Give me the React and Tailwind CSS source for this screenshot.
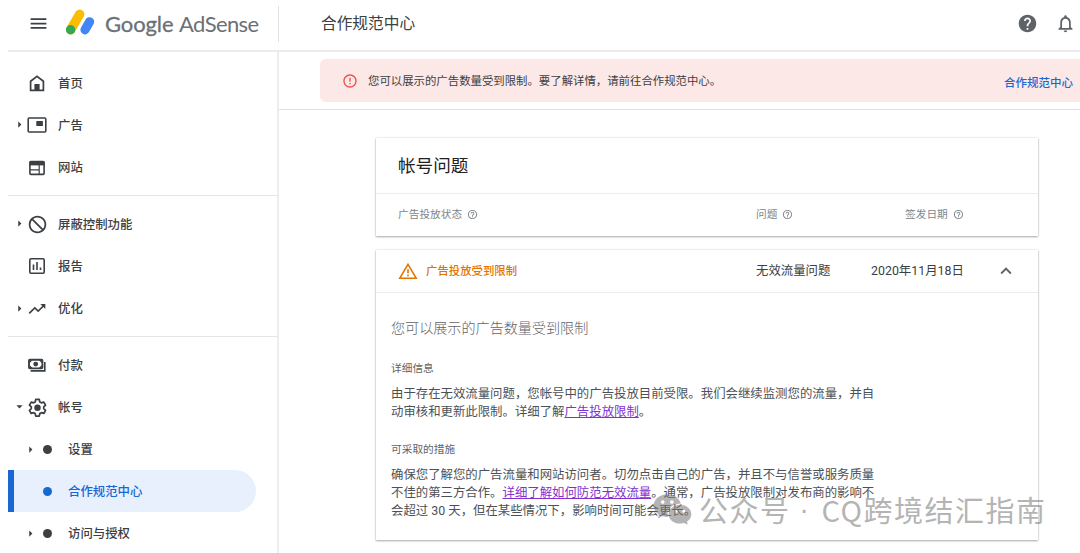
import {
    MdMenu,
    MdHelp,
    MdHelpOutline,
    MdNotificationsNone,
    MdErrorOutline,
    MdBlock,
    MdTrendingUp,
    MdExpandLess,
    MdArrowRight,
    MdArrowDropDown,
} from "react-icons/md";
import { AiFillWechat } from "react-icons/ai";

function HomeIcon() {
    return (
        <svg viewBox="0 0 18 18" className="size-[18px]" fill="none" stroke="currentColor" strokeWidth="1.7">
            <path d="M2.6 16.3V7.2L9 2.4l6.4 4.8v9.1z" />
            <path d="M6.4 10h5.2v6.3H6.4z" fill="currentColor" stroke="none" />
        </svg>
    );
}

function AdsIcon() {
    return (
        <svg viewBox="0 0 20 18" className="h-[18px] w-5 shrink-0" fill="none" stroke="currentColor" strokeWidth="1.6">
            <rect x="1.2" y="2" width="17.6" height="14" rx="1" />
            <path d="M9.3 5h6.6v5H9.3z" fill="currentColor" stroke="none" />
        </svg>
    );
}

function SitesIcon() {
    return (
        <svg viewBox="0 0 18 18" className="size-[18px]" fill="none" stroke="currentColor">
            <rect x="1.9" y="2.6" width="14.2" height="12.8" rx="1" strokeWidth="1.6" />
            <path d="M1.6 2.4h14.8v4H1.6z" fill="currentColor" stroke="none" />
            <path d="M2 10.8h9M11.2 6v9.5" strokeWidth="1.2" />
        </svg>
    );
}

function ReportsIcon() {
    return (
        <svg viewBox="0 0 18 18" className="size-[18px]" fill="none" stroke="currentColor" strokeWidth="1.6">
            <rect x="1.8" y="1.8" width="14.4" height="14.4" rx="1.2" />
            <path d="M5.5 7.6v5.4M9 5v8M12.5 10.4V13" />
        </svg>
    );
}

function PaymentsIcon() {
    return (
        <svg viewBox="0 0 18 18" className="size-[18px]" fill="none" stroke="currentColor">
            <rect x="1" y="3.8" width="13.4" height="8.6" rx="0.8" strokeWidth="1.9" />
            <circle cx="7.7" cy="8.1" r="2.4" fill="currentColor" stroke="none" />
            <path d="M1.5 4.3h3L1.5 7.2zM13.9 4.3h-3l3 2.9zM1.5 11.9h3L1.5 9zM13.9 11.9h-3l3-2.9z" fill="currentColor" stroke="none" />
            <path d="M2.6 14.9h14.2V6" strokeWidth="1.6" />
        </svg>
    );
}

function GearIcon() {
    return (
        <svg viewBox="0 0 24 24" className="size-[21px] shrink-0" fill="none" stroke="currentColor" strokeWidth="2">
            <path
                strokeLinejoin="round"
                d="M10 2.8h4l.6 2.8 1.9 1.1 2.7-.9 2 3.5-2.1 1.9v2.2l2.1 1.9-2 3.5-2.7-.9-1.9 1.1-.6 2.8h-4l-.6-2.8-1.9-1.1-2.7.9-2-3.5 2.1-1.9v-2.2L2.8 9.3l2-3.5 2.7.9 1.9-1.1z"
            />
            <circle cx="12" cy="12.2" r="3.7" fill="currentColor" stroke="none" />
        </svg>
    );
}

function WarningIcon() {
    return (
        <svg viewBox="0 0 20 18" className="h-[18px] w-5" fill="none" stroke="currentColor" strokeWidth="1.6">
            <path d="M10 2.4 18.2 16.2H1.8z" />
            <path d="M10 7.2v4M10 12.6v1.7" />
        </svg>
    );
}

function Logo() {
    return (
        <div className="flex items-center">
            <svg viewBox="0 0 30 28" className="h-7 w-[30px] overflow-visible">
                <path d="M5.6 19.8 14.7 4.2" stroke="#fbbc04" strokeWidth="9.4" strokeLinecap="round" />
                <path d="M20 19.8l4.6-8" stroke="#4285f4" strokeWidth="9.2" strokeLinecap="round" />
                <circle cx="5.6" cy="19.8" r="4.7" fill="#34a853" />
            </svg>
            <div className="ml-[10px] flex gap-[5px] pt-px font-[Lato] text-[22px] leading-7 text-[#6b7075]">
                <span className="w-[69px] tracking-[-0.1px] [-webkit-text-stroke:0.3px_#6b7075]">Google</span>
                <span className="tracking-[-0.6px]">AdSense</span>
            </div>
        </div>
    );
}

const navGroups = [
    [
        { label: "首页", icon: <HomeIcon /> },
        { label: "广告", icon: <AdsIcon />, arrow: "right" },
        { label: "网站", icon: <SitesIcon /> },
    ],
    [
        { label: "屏蔽控制功能", icon: <MdBlock className="size-[21px] shrink-0 -scale-x-100" />, arrow: "right" },
        { label: "报告", icon: <ReportsIcon /> },
        { label: "优化", icon: <MdTrendingUp className="size-[20px] shrink-0" />, arrow: "right" },
    ],
    [
        { label: "付款", icon: <PaymentsIcon /> },
        { label: "帐号", icon: <GearIcon />, arrow: "down" },
        { label: "设置", child: true, arrow: "right" },
        { label: "合作规范中心", child: true, active: true },
        { label: "访问与授权", child: true, arrow: "right" },
    ],
];

function Arrow({ type }) {
    return (
        <span className="flex w-3 shrink-0 justify-center">
            {type === "right" && <MdArrowRight className="size-[15px] shrink-0" />}
            {type === "down" && <MdArrowDropDown className="size-[15px] shrink-0" />}
        </span>
    );
}

function NavItem({ item }) {
    if (item.child) {
        return (
            <a
                className={
                    item.active
                        ? "mr-[21px] flex h-[42.2px] items-center rounded-r-full border-l-[6px] border-[#1967d2] bg-[#e8f0fe] pl-[10px] text-[#1967d2]"
                        : "flex h-[42.2px] items-center pl-4"
                }
            >
                <Arrow type={item.arrow} />
                <span className="ml-[7px] size-[9px] rounded-full bg-current" />
                <span className="ml-4 pt-0.5">{item.label}</span>
            </a>
        );
    }

    return (
        <a className="flex h-[42.2px] items-center pl-[5px]">
            <Arrow type={item.arrow} />
            <span className="ml-px flex w-[22px] justify-center pt-px">{item.icon}</span>
            <span className="ml-[10px] pt-[3px]">{item.label}</span>
        </a>
    );
}

function Sidebar() {
    return (
        <nav className="w-[271px] shrink-0 border-r-2 border-[#ededee] pt-[3px] text-[12.4px] font-medium text-[#3c4043]">
            {navGroups.map((group, i) => (
                <div key={i} className="border-b border-[#e4e5e6] py-[6.7px] last:border-b-0">
                    {group.map((item) => (
                        <NavItem key={item.label} item={item} />
                    ))}
                </div>
            ))}
        </nav>
    );
}

function Column({ children }) {
    return (
        <span className="flex items-center gap-[5px]">
            <span className="pt-px">{children}</span>
            <MdHelpOutline className="size-[11px]" />
        </span>
    );
}

export default function App() {
    return (
        <div className="relative flex h-[553px] w-[1080px] flex-col overflow-hidden bg-white pl-2 font-[Roboto,'Noto_Sans_CJK_SC',sans-serif] text-[#3c4043]">
            <header className="flex h-[52px] shrink-0 items-center border-b-2 border-[#ececed] pb-[3px]">
                <MdMenu className="ml-5 size-[21px]" />
                <div className="ml-4 w-[213px]">
                    <Logo />
                </div>
                <div className="h-9 w-px bg-[#e0e0e0]" />
                <h1 className="ml-[42px] text-[15.7px] leading-none">合作规范中心</h1>
                <div className="ml-auto flex items-center gap-[17px] pr-1 text-[#5f6368]">
                    <MdHelp className="size-[21px]" />
                    <MdNotificationsNone className="size-[21px]" />
                </div>
            </header>

            <div className="flex min-h-0 flex-1">
                <Sidebar />

                <main className="flex-1">
                    <div className="border-b border-[#dfe1e5] pt-[7px] pb-[7px] pl-[41px]">
                        <div className="flex h-[43px] items-center rounded-l-md bg-[#fce8e6] pr-[7px] pl-[22px]">
                            <MdErrorOutline className="size-4 text-[#e8514a]" />
                            <span className="ml-[10px] pt-0.5 text-[11.4px] leading-none">
                                您可以展示的广告数量受到限制。要了解详情，请前往合作规范中心。
                            </span>
                            <a className="ml-auto pt-[7px] text-[11.5px] leading-none font-medium text-[#1967d2]">
                                合作规范中心
                            </a>
                        </div>
                    </div>

                    <div className="mt-7 ml-[97px] flex w-[662px] flex-col gap-[14px]">
                        <section className="shadow-[0_1px_2px_rgba(0,0,0,0.3),0_0_2px_rgba(0,0,0,0.15)]">
                            <h2 className="flex h-14 items-center border-b border-[#ececec] pt-0.5 pl-[22px] text-[17.6px] text-[#202124]">
                                帐号问题
                            </h2>
                            <div className="grid h-[42px] grid-cols-[358px_149px_1fr] items-center pl-[22px] text-[10.7px] text-[#80868b]">
                                <Column>广告投放状态</Column>
                                <Column>问题</Column>
                                <Column>签发日期</Column>
                            </div>
                        </section>

                        <section className="h-[290px] shadow-[0_1px_2px_rgba(0,0,0,0.3),0_0_2px_rgba(0,0,0,0.15)]">
                            <div className="flex h-[43px] items-center border-b border-[#ececec] pl-[22px] text-[12.4px] text-[#3c4043]">
                                <div className="flex w-[358px] items-center gap-2 text-[11.4px] font-medium text-[#e37400]">
                                    <WarningIcon />
                                    <span className="pt-0.5">广告投放受到限制</span>
                                </div>
                                <span className="w-[115px] pt-px">无效流量问题</span>
                                <span className="w-[92px] pt-px whitespace-nowrap">2020年11月18日</span>
                                <MdExpandLess className="ml-8 size-[22px] text-[#5f6368]" />
                            </div>
                            <div className="pt-[25px] pl-[15px] text-[#5f6368]">
                                <h3 className="text-[14.1px] leading-5 font-light">您可以展示的广告数量受到限制</h3>
                                <h4 className="mt-[23px] text-[10.7px] leading-4">详细信息</h4>
                                <p className="mt-2 text-[12.4px] leading-[17.7px] whitespace-nowrap text-[#4d5156]">
                                    由于存在无效流量问题，您帐号中的广告投放目前受限。我们会继续监测您的流量，并自
                                    <br />
                                    动审核和更新此限制。详细了解
                                    <a className="text-[#8430ce] underline">广告投放限制</a>。
                                </p>
                                <h4 className="mt-[22px] text-[10.7px] leading-4">可采取的措施</h4>
                                <p className="mt-2 text-[12.4px] leading-[17.7px] whitespace-nowrap text-[#4d5156]">
                                    确保您了解您的广告流量和网站访问者。切勿点击自己的广告，并且不与信誉或服务质量
                                    <br />
                                    不佳的第三方合作。
                                    <a className="text-[#8430ce] underline">详细了解如何防范无效流量</a>
                                    。通常，广告投放限制对发布商的影响不
                                    <br />
                                    会超过 30 天，但在某些情况下，影响时间可能会更长。
                                </p>
                            </div>
                        </section>
                    </div>
                </main>
            </div>

            {/* watermark over the page */}
            <div className="absolute top-[488px] left-[651px] flex items-center whitespace-nowrap text-[#777] opacity-55">
                <AiFillWechat className="size-[43px]" />
                <span className="ml-[5px] flex font-['Noto_Sans_CJK_SC',sans-serif] text-[29px] leading-[43px] font-normal tracking-[1.5px]">
                    公众号
                    <span className="w-[31px] pr-1 text-center font-['Liberation_Sans'] tracking-normal">·</span>
                    CQ跨境结汇指南
                </span>
            </div>
        </div>
    );
}
